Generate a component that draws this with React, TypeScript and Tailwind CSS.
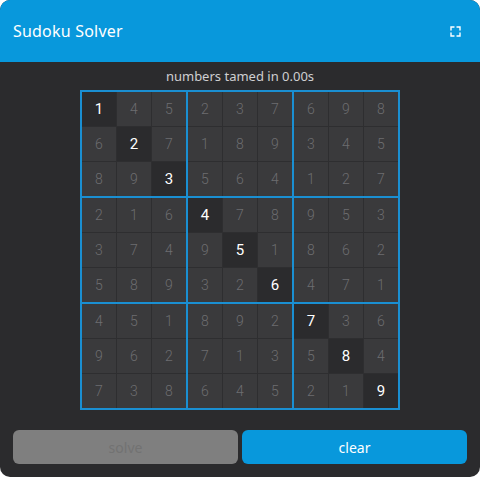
const board = [
  [1, 4, 5, 2, 3, 7, 6, 9, 8],
  [6, 2, 7, 1, 8, 9, 3, 4, 5],
  [8, 9, 3, 5, 6, 4, 1, 2, 7],
  [2, 1, 6, 4, 7, 8, 9, 5, 3],
  [3, 7, 4, 9, 5, 1, 8, 6, 2],
  [5, 8, 9, 3, 2, 6, 4, 7, 1],
  [4, 5, 1, 8, 9, 2, 7, 3, 6],
  [9, 6, 2, 7, 1, 3, 5, 8, 4],
  [7, 3, 8, 6, 4, 5, 2, 1, 9],
]

function ExpandIcon() {
  return (
    <svg width="11" height="11" viewBox="0 0 11 11" fill="none" stroke="white" strokeWidth="1.4" strokeLinecap="round">
      <path d="M1 4V1h3M7 1h3v3M10 7v3H7M4 10H1V7" />
    </svg>
  )
}

function Box({ bi }: { bi: number }) {
  const br = Math.floor(bi / 3) * 3
  const bc = (bi % 3) * 3
  const cells = []
  for (let r = 0; r < 3; r++) {
    for (let c = 0; c < 3; c++) {
      const row = br + r
      const col = bc + c
      const given = row === col
      cells.push(
        <div
          key={`${r}-${c}`}
          className={
            given
              ? 'w-[34px] h-[34px] flex items-center justify-center bg-[#2b2b2d] text-white text-[15px] font-normal'
              : 'w-[34px] h-[34px] flex items-center justify-center bg-[#3a3a3c] text-[#6d6d70] text-[14px] font-light'
          }
        >
          {board[row][col]}
        </div>
      )
    }
  }
  return <div className="grid grid-cols-3 gap-px bg-[#2e2e30]">{cells}</div>
}

export default function App() {
  return (
    <div className="w-[480px] h-[477px] bg-white">
      <div className="w-full h-full rounded-[10px] overflow-hidden bg-[#2b2b2d] flex flex-col font-['Noto_Sans',sans-serif]">
        <header className="h-[62px] bg-[#0898dc] flex items-center justify-between pl-[13px] pr-[19px]">
          <h1 className="text-white text-[16px] tracking-[0.2px]">Sudoku Solver</h1>
          <ExpandIcon />
        </header>

        <p className="mt-[5px] text-center text-[13px] text-[#cfcfd1] leading-[18px]">numbers tamed in 0.00s</p>

        <div className="mt-[5px] flex justify-center">
          <div className="grid grid-cols-3 gap-[2px] p-[2px] bg-[#1a8fd2] font-['Roboto',sans-serif]">
            {Array.from({ length: 9 }, (_, i) => (
              <Box key={i} bi={i} />
            ))}
          </div>
        </div>

        <div className="mt-[20px] px-[13px] grid grid-cols-2 gap-[4px]">
          <button className="h-[34px] rounded-[6px] bg-[#7f7f7f] text-[#727272] text-[14px]">solve</button>
          <button className="h-[34px] rounded-[6px] bg-[#0898dc] text-white text-[14px]">clear</button>
        </div>
      </div>
    </div>
  )
}
